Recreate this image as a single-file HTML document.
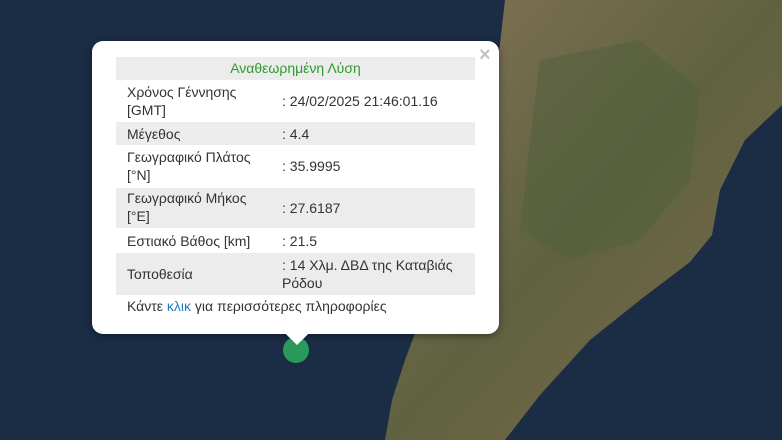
<!DOCTYPE html><html><head><meta charset="utf-8"><style>
body{margin:0;width:782px;height:440px;overflow:hidden;background:#1b2c45;font-family:"Liberation Sans",sans-serif;position:relative}
.pop{position:absolute;left:92px;top:41px;width:407px;height:293px;background:#fff;border-radius:11px;box-shadow:0 2px 8px rgba(0,0,0,.4)}
.tip{position:absolute;left:286px;top:334px;width:0;height:0;border-left:11px solid transparent;border-right:11px solid transparent;border-top:11px solid #fff}
.x{position:absolute;left:479px;top:44px;color:#c3c3c3;font-size:20px;font-weight:bold}
.row{position:absolute;left:116px;width:359px;font-size:14px;color:#333}
.g{background:#ececec}
.l{position:absolute;left:11px;line-height:18px}
.v{position:absolute;left:166px;line-height:18px}
</style></head><body>
<svg width="782" height="440" style="position:absolute;left:0;top:0">
<defs><linearGradient id="lg" x1="0" y1="0" x2="1" y2="1"><stop offset="0" stop-color="#85735a"/><stop offset=".5" stop-color="#5f6240"/><stop offset="1" stop-color="#7f6a4e"/></linearGradient></defs>
<polygon fill="url(#lg)" points="505,0 782,0 782,105 745,140 720,190 712,235 690,262 640,300 590,340 540,395 505,440 385,440 392,400 405,360 420,320 440,275 470,210 488,140 497,70"/>
<polygon fill="#4f5f3c" opacity=".5" points="540,60 640,40 700,90 690,180 640,240 570,260 520,230 530,140"/>
</svg>
<div class="pop"></div><div class="tip"></div>
<div class="x">×</div>
<div class="row g" style="top:57px;height:23px;text-align:center;color:#2f9a2f;line-height:23px">Αναθεωρημένη Λύση</div>
<div class="row" style="top:80px;height:42px"><div class="l" style="top:3px">Χρόνος Γέννησης<br>[GMT]</div><div class="v" style="top:12px">: 24/02/2025 21:46:01.16</div></div>
<div class="row g" style="top:122px;height:23px"><div class="l" style="top:3px">Μέγεθος</div><div class="v" style="top:3px">: 4.4</div></div>
<div class="row" style="top:145px;height:43px"><div class="l" style="top:3px">Γεωγραφικό Πλάτος<br>[°N]</div><div class="v" style="top:12px">: 35.9995</div></div>
<div class="row g" style="top:188px;height:40px"><div class="l" style="top:1px">Γεωγραφικό Μήκος<br>[°E]</div><div class="v" style="top:11px">: 27.6187</div></div>
<div class="row" style="top:228px;height:25px"><div class="l" style="top:4px">Εστιακό Βάθος [km]</div><div class="v" style="top:4px">: 21.5</div></div>
<div class="row g" style="top:253px;height:42px"><div class="l" style="top:12px">Τοποθεσία</div><div class="v" style="top:3px">: 14 Χλμ. ΔΒΔ της Καταβιάς<br>Ρόδου</div></div>
<div class="row" style="top:297px;height:20px"><div class="l" style="top:0">Κάντε <span style="color:#1f7fbf">κλικ</span> για περισσότερες πληροφορίες</div></div>
<div style="position:absolute;left:283px;top:337px;width:26px;height:26px;border-radius:50%;background:#2a9a5a"></div>
<div class="tip" style="z-index:2"></div>
</body></html>
